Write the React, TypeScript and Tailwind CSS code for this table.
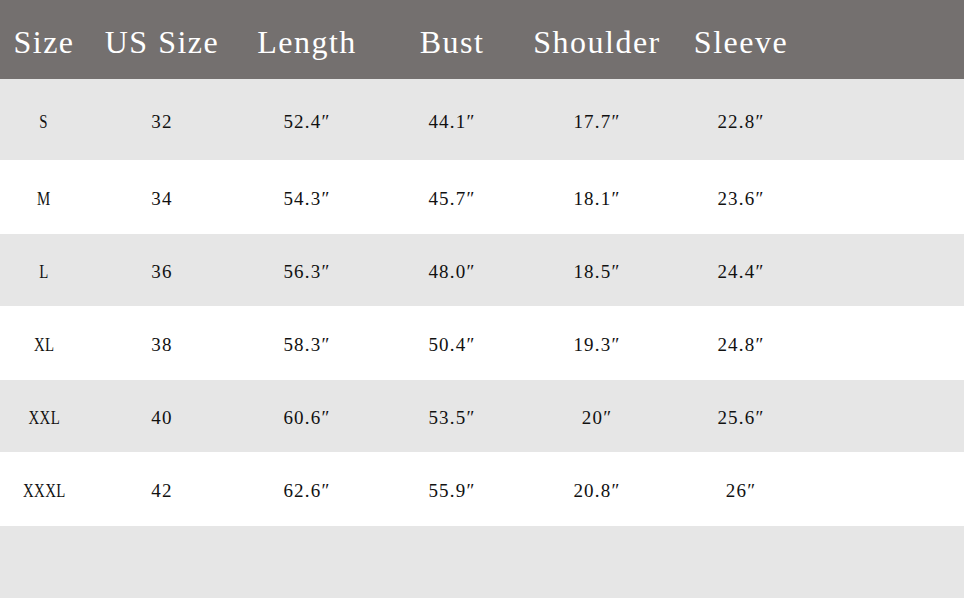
import React from "react";

const headers = ["Size", "US Size", "Length", "Bust", "Shoulder", "Sleeve"];
const rows: { h: string; bg: string; cells: string[] }[] = [
  { h: "h-[81px]", bg: "bg-[#e6e6e6]", cells: ["S", "32", "52.4″", "44.1″", "17.7″", "22.8″"] },
  { h: "h-[74px]", bg: "bg-white", cells: ["M", "34", "54.3″", "45.7″", "18.1″", "23.6″"] },
  { h: "h-[72px]", bg: "bg-[#e6e6e6]", cells: ["L", "36", "56.3″", "48.0″", "18.5″", "24.4″"] },
  { h: "h-[74px]", bg: "bg-white", cells: ["XL", "38", "58.3″", "50.4″", "19.3″", "24.8″"] },
  { h: "h-[72px]", bg: "bg-[#e6e6e6]", cells: ["XXL", "40", "60.6″", "53.5″", "20″", "25.6″"] },
  { h: "h-[74px]", bg: "bg-white", cells: ["XXXL", "42", "62.6″", "55.9″", "20.8″", "26″"] },
];

const grid = "grid grid-cols-[88px_148px_142px_148px_142px_146px_1fr]";
const font = "font-['Liberation_Serif','DejaVu_Serif',serif]";

export default function App() {
  return (
    <div className={`w-[964px] h-[598px] overflow-hidden ${font}`}>
      <div className={`${grid} h-[79px] bg-[#74706f] items-center pt-[4px]`}>
        {headers.map((t, i) => (
          <div key={i} className="flex justify-center">
            <span className="text-white text-[32px] tracking-[1.5px] whitespace-pre leading-none">{t}</span>
          </div>
        ))}
        <div />
      </div>
      {rows.map((r, ri) => (
        <div key={ri} className={`${grid} ${r.h} ${r.bg} items-center pt-[3px]`}>
          {r.cells.map((c, ci) => (
            <div key={ci} className="flex justify-center">
              <span
                className={`text-[19px] leading-none text-[#111] ${
                  ci === 0 ? "inline-block scale-x-[0.78] tracking-[0.5px]" : "tracking-[1.2px]"
                }`}
              >
                {c}
              </span>
            </div>
          ))}
          <div />
        </div>
      ))}
      <div className="h-[72px] bg-[#e6e6e6]" />
    </div>
  );
}
